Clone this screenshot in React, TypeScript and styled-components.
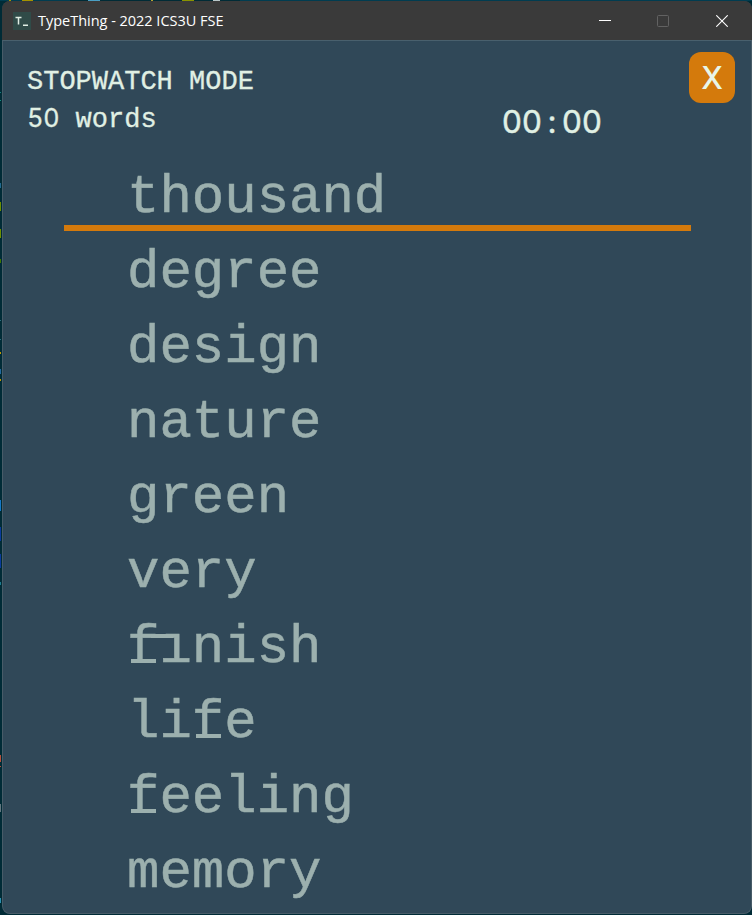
import React from "react";
import styled, { createGlobalStyle } from "styled-components";

const GlobalStyle = createGlobalStyle`
  * { box-sizing: border-box; }
  html, body { margin: 0; height: 100%; overflow: hidden; background: #05303f; }
`;

const Desktop = styled.div`
  width: 752px;
  height: 915px;
  padding: 1px 0 1px 2px;
  background:
    linear-gradient(#a59300, #a59300) 9px 0 / 2px 1px no-repeat,
    linear-gradient(#a59300, #a59300) 22px 0 / 11px 1px no-repeat,
    linear-gradient(#4a9fc4, #4a9fc4) 88px 0 / 12px 1px no-repeat,
    linear-gradient(#b5a030, #b5a030) 151px 0 / 2px 1px no-repeat,
    linear-gradient(#8a9300, #8a9300) 182px 0 / 12px 1px no-repeat,
    linear-gradient(#b8c6c8, #b8c6c8) 213px 0 / 7px 1px no-repeat,
    linear-gradient(#147f80, #147f80) 0 92px / 1px 1px no-repeat,
    linear-gradient(#149080, #149080) 0 100px / 1px 1px no-repeat,
    linear-gradient(#216a91, #216a91) 0 183px / 1px 5px no-repeat,
    linear-gradient(#6e8f00, #6e8f00) 0 202px / 1px 9px no-repeat,
    linear-gradient(#6e8f00, #6e8f00) 0 229px / 1px 9px no-repeat,
    linear-gradient(#3f7800, #3f7800) 0 259px / 1px 4px no-repeat,
    linear-gradient(#2d7180, #2d7180) 0 320px / 1px 1px no-repeat,
    linear-gradient(#2d7180, #2d7180) 0 339px / 1px 1px no-repeat,
    linear-gradient(#c09800, #c09800) 0 352px / 1px 2px no-repeat,
    linear-gradient(#216aa1, #216aa1) 0 369px / 1px 5px no-repeat,
    linear-gradient(#c09800, #c09800) 0 379px / 1px 2px no-repeat,
    linear-gradient(#1478c8, #1478c8) 0 500px / 1px 11px no-repeat,
    linear-gradient(#0a3a9c, #0a3a9c) 0 527px / 1px 14px no-repeat,
    linear-gradient(#0a3a9c, #0a3a9c) 0 554px / 1px 14px no-repeat,
    linear-gradient(#1c7c90, #1c7c90) 0 582px / 1px 3px no-repeat,
    linear-gradient(#b7503c, #b7503c) 0 755px / 1px 7px no-repeat,
    linear-gradient(#b7503c, #b7503c) 0 766px / 1px 1px no-repeat,
    linear-gradient(#637780, #637780) 0 804px / 1px 8px no-repeat,
    linear-gradient(#2a91b0, #2a91b0) 0 898px / 1px 5px no-repeat,
    linear-gradient(90deg, #003c50 0, #003c50 70px, #002b36 70px, #002b36 240px, #003c50 240px) 0 0 / 752px 1px no-repeat,
    #002b36;
`;

const Window = styled.main`
  height: 913px;
  display: flex;
  flex-direction: column;
  overflow: hidden;
  border-radius: 8px;
  background: #304858;
`;

const TitleBar = styled.header`
  height: 39px;
  flex: none;
  display: flex;
  align-items: center;
  padding: 0 1px 0 11px;
  background: #3a3a3a;
`;

const AppIcon = styled.svg`
  width: 18px;
  height: 18px;
  flex: none;
`;

const Title = styled.div`
  margin: 0 auto 0 7px;
  color: #fff;
  font: 14.5px/20px "Open Sans", "Noto Sans", sans-serif;
  letter-spacing: -0.02px;
  white-space: nowrap;
`;

const WindowButton = styled.button<{ $muted?: boolean }>`
  width: 58.5px;
  height: 39px;
  padding: 0;
  border: 0;
  display: grid;
  place-items: center;
  background: none;
  color: ${(p) => (p.$muted ? "#626262" : "#fff")};
  svg { display: block; }
`;

const Client = styled.section`
  flex: 1;
  border: 1px solid #485c68;
  border-top-color: #49606d;
  border-radius: 0 0 8px 8px;
  background: #304858;
`;

const InfoBar = styled.div`
  height: 119px;
  display: flex;
  padding-left: 24px;
  color: #e0f0e4;
`;

const Summary = styled.div`
  width: 475px;
  padding-top: 22px;
  font: 27px/38px "Liberation Mono", monospace;
  white-space: pre;
  -webkit-text-stroke: 0.3px currentColor;
`;

const Cell = styled.span<{ $w: number }>`
  display: inline-block;
  width: ${(p) => p.$w}px;
  text-align: center;
`;

const Digits = styled.span`
  font-family: Inter, sans-serif;
  font-size: 25px;
  line-height: 1;
`;

const Timer = styled.div`
  width: 187px;
  padding-top: 61px;
  font: 31.5px/40px Inter, sans-serif;
  -webkit-text-stroke: 0.4px currentColor;
`;

const CloseButton = styled.button`
  width: 46px;
  height: 51px;
  margin-top: 11px;
  padding: 0;
  border: 0;
  border-radius: 12px;
  background: #d47a0c;
  color: #e8f6e8;
  font: 500 31px/51px Inter, sans-serif;
  text-align: center;
`;

const WordList = styled.div`
  display: flex;
  flex-direction: column;
`;

const Word = styled.div<{ $current?: boolean }>`
  position: relative;
  height: 75px;
  padding-left: 124px;
  color: #9cb0ae;
  font: 54px/75px "Liberation Mono", monospace;
  -webkit-text-stroke: 0.5px currentColor;
  white-space: nowrap;

  &::after {
    content: ${(p) => (p.$current ? '""' : "none")};
    position: absolute;
    left: 61px;
    top: 65px;
    width: 627px;
    height: 6px;
    background: #d47a0c;
  }
`;

/* The f carries a slab foot along the baseline. */
const SlabF = styled.span`
  position: relative;
  &::after {
    content: "";
    position: absolute;
    left: 4px;
    bottom: 15px;
    width: 25px;
    height: 4px;
    background: #9cb0ae;
  }
`;

/* A dotless i whose arm joins the preceding f. */
const JoinedI = styled.span`
  position: relative;
  &::before {
    content: "";
    position: absolute;
    left: 8px;
    top: 4px;
    width: 18px;
    height: 11px;
    background: #304858;
  }
  &::after {
    content: "";
    position: absolute;
    left: -8px;
    top: 17px;
    width: 22px;
    height: 4px;
    background: #9cb0ae;
  }
`;

const words = ["thousand", "degree", "design", "nature", "green", "very", "finish", "life", "feeling", "memory"];

function letters(word: string) {
  return [...word].map((c, i) => {
    if (c === "f") return <SlabF key={i}>f</SlabF>;
    if (c === "i" && word[i - 1] === "f") return <JoinedI key={i}>i</JoinedI>;
    return c;
  });
}

export default function App() {
  return (
    <>
      <GlobalStyle />
      <Desktop>
        <Window>
          <TitleBar>
            <AppIcon viewBox="0 0 18 18">
              <rect width="18" height="18" fill="#304b48" />
              <path d="M2.5 5.5h6M5.5 5.5v7M10 13.2h5" stroke="#e0eee4" strokeWidth="1.5" fill="none" />
            </AppIcon>
            <Title>TypeThing - 2022 ICS3U FSE</Title>
            <WindowButton aria-label="Minimize">
              <svg width="12" height="12"><path d="M0 5.5h12" stroke="currentColor" /></svg>
            </WindowButton>
            <WindowButton $muted aria-label="Maximize">
              <svg width="12" height="12"><rect x=".5" y=".5" width="11" height="11" rx="1" fill="none" stroke="currentColor" /></svg>
            </WindowButton>
            <WindowButton aria-label="Close">
              <svg width="12" height="12"><path d="M.3.3l11.4 11.4M11.7.3L.3 11.7" stroke="currentColor" strokeWidth="1.1" /></svg>
            </WindowButton>
          </TitleBar>
          <Client>
            <InfoBar>
              <Summary>
                <div>STOPWATCH MODE</div>
                <div><Digits>{[..."50"].map((c, i) => <Cell $w={16.2} key={i}>{c}</Cell>)}</Digits> words</div>
              </Summary>
              <Timer>{[..."00:00"].map((c, i) => <Cell $w={20} key={i}>{c}</Cell>)}</Timer>
              <CloseButton>X</CloseButton>
            </InfoBar>
            <WordList>
              {words.map((w, i) => <Word key={w} $current={i === 0}>{letters(w)}</Word>)}
            </WordList>
          </Client>
        </Window>
      </Desktop>
    </>
  );
}
